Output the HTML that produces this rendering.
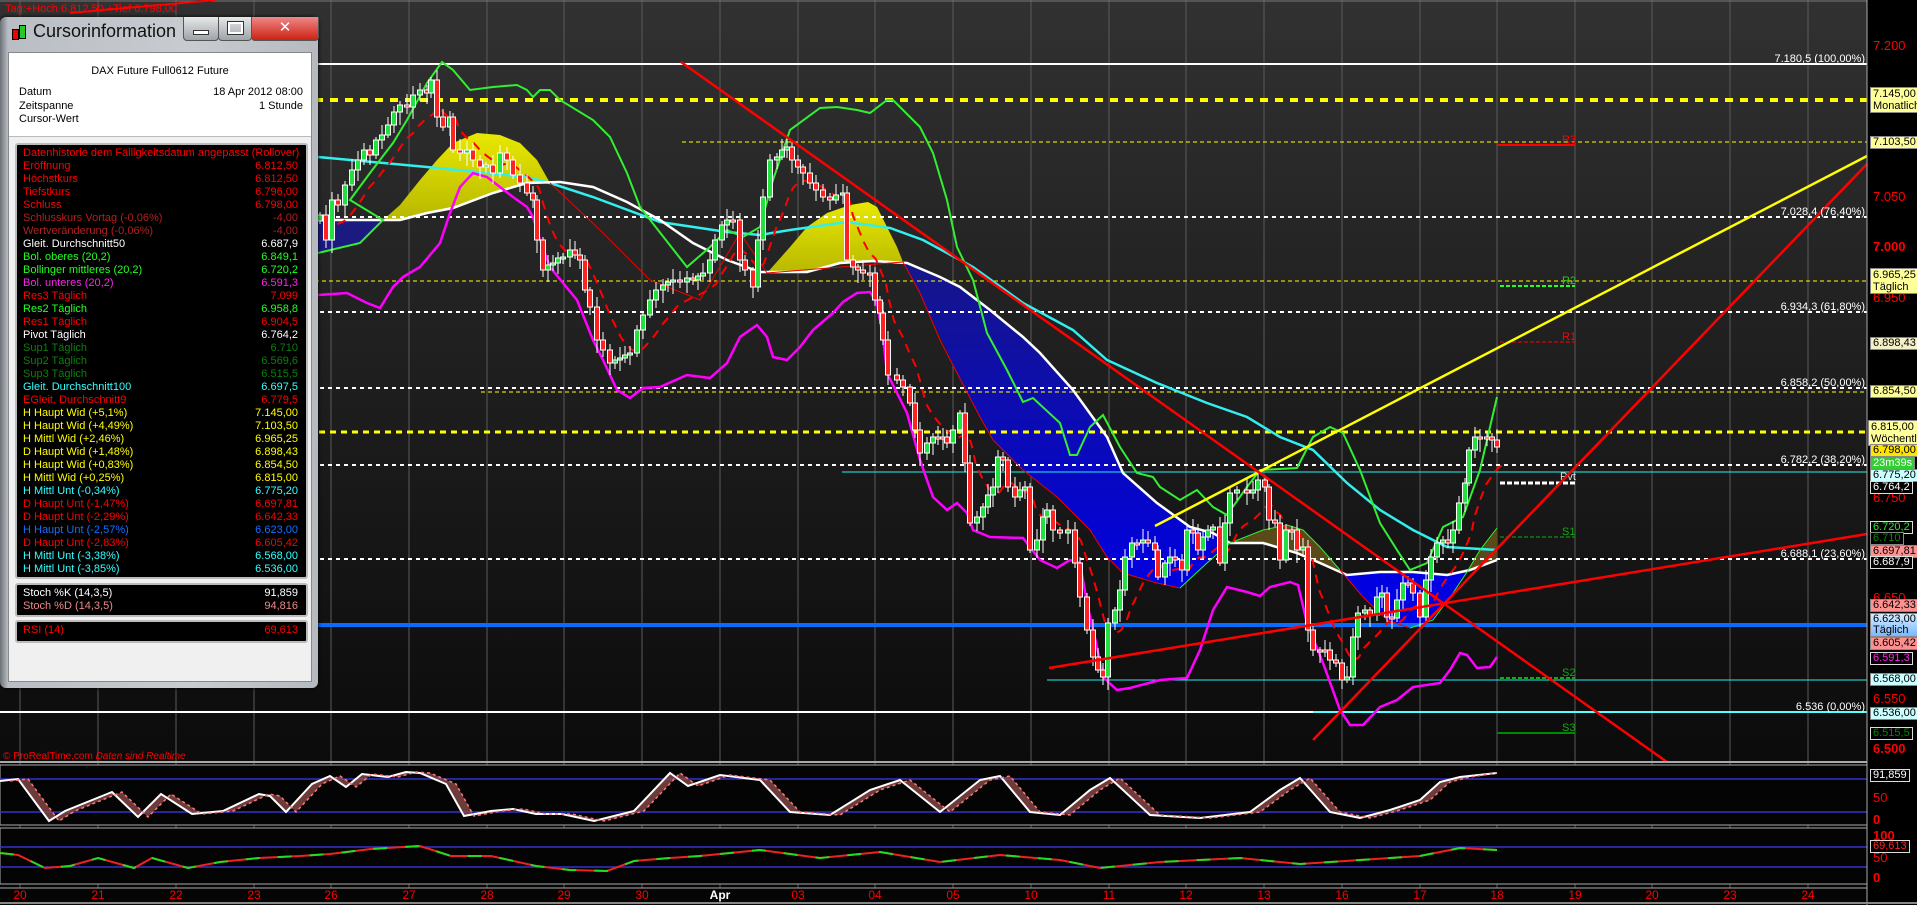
<!DOCTYPE html>
<html><head><meta charset="utf-8"><style>
html,body{margin:0;padding:0;background:#000;width:1917px;height:905px;overflow:hidden;font-family:"Liberation Sans",sans-serif}
#win{position:absolute;left:0;top:17px;width:318px;height:671px;border-radius:6px;background:linear-gradient(90deg,#6d7277 0,#b9bec4 8px,#c8ccd1 60%,#b5bac0);box-shadow:0 0 4px #000}
#title{position:absolute;left:33px;top:4px;font-size:18px;color:#111}
.btn{position:absolute;top:0;height:23px;border:1px solid #555;border-top:none;border-radius:0 0 4px 4px;background:linear-gradient(#e6e8ea,#9ea3a8)}
#inner{position:absolute;left:8px;top:35px;width:302px;height:628px;background:#f0f0f0;border:1px solid #888}
#hdr{position:absolute;left:0;top:0;width:302px;height:83px;background:#fff;border-bottom:1px solid #bbb;font-size:11px;color:#000}
.box{position:absolute;left:6px;width:289px;background:#000;border:2px solid #bbb;border-radius:3px;font-size:11px;line-height:13px}
.r{position:relative;height:13px;padding-left:6px;white-space:nowrap}
.r span{position:absolute;right:8px;top:0}
.ax{position:absolute;font-size:12px;color:#f00}
.lb{position:absolute;left:1870px;font-size:11px;line-height:11px;color:#000;padding:0 2px;border:1px solid #888;white-space:nowrap}
</style></head><body>
<svg id="c" width="1917" height="905" style="position:absolute;left:0;top:0" xmlns="http://www.w3.org/2000/svg">
<defs>
<linearGradient id="bg" x1="0" y1="0" x2="0" y2="1"><stop offset="0" stop-color="#313131"/><stop offset="1" stop-color="#0b0b0b"/></linearGradient>
<linearGradient id="bl" x1="0" y1="0" x2="0" y2="1"><stop offset="0" stop-color="#16168a"/><stop offset="1" stop-color="#0000e0"/></linearGradient>
<linearGradient id="yl" x1="0" y1="0" x2="0" y2="1"><stop offset="0" stop-color="#e8e800"/><stop offset="1" stop-color="#b8b800"/></linearGradient>
</defs>
<rect x="0" y="0" width="1867" height="762" fill="url(#bg)"/>
<rect x="0" y="762" width="1917" height="143" fill="#050505"/>
<rect x="1867" y="0" width="50" height="905" fill="#000"/>
<g id="grid" stroke="#5a5a5a" stroke-width="1"></g>
<line x1="0" y1="1" x2="1867" y2="1" stroke="#777"/>
<!-- clouds -->
<polygon fill="url(#yl)" points="383,220 400,205 420,180 437,160 453,143 477,133 500,135 520,143 537,160 550,183 527,183 493,193 453,208 427,213 400,220"/>
<polygon fill="url(#yl)" points="767,273 790,247 807,227 827,213 850,205 868,202 877,207 887,227 897,247 903,262 873,261 840,263 807,272"/>
<polygon fill="#1a1a80" points="318,253 360,243 383,220 318,220"/>
<polygon fill="url(#bl)" points="903,262 940,277 960,287 990,310 1023,337 1040,353 1073,390 1107,437 1123,473 1157,503 1190,527 1213,533 1230,543 1207,563 1180,588 1157,583 1123,573 1107,557 1090,530 1057,497 1023,470 993,440 980,417 957,373 937,330 920,293"/>
<polygon fill="#5a4a1a" points="1230,543 1263,530 1287,525 1303,530 1320,547 1340,570 1297,553 1263,543"/>
<polygon fill="#0000e0" points="1340,570 1347,575 1380,571 1413,572 1447,575 1467,572 1453,593 1433,620 1410,628 1387,620 1363,597"/>
<polygon fill="#5a4a1a" points="1467,572 1480,550 1497,528 1497,560 1470,570"/>
<!-- horizontal levels -->
<line x1="0" y1="64" x2="1867" y2="64" stroke="#fff" stroke-width="2"/>
<line x1="0" y1="100" x2="1867" y2="100" stroke="#ff0" stroke-width="4" stroke-dasharray="8,7"/>
<line x1="682" y1="142" x2="1867" y2="142" stroke="#ff0" stroke-width="1" stroke-dasharray="4,3"/>
<line x1="0" y1="217" x2="1867" y2="217" stroke="#fff" stroke-width="2" stroke-dasharray="4,4"/>
<line x1="0" y1="281" x2="1867" y2="281" stroke="#ff0" stroke-width="1" stroke-dasharray="4,3"/>
<line x1="0" y1="312" x2="1867" y2="312" stroke="#fff" stroke-width="2" stroke-dasharray="4,4"/>
<line x1="0" y1="388" x2="1867" y2="388" stroke="#fff" stroke-width="2" stroke-dasharray="4,4"/>
<line x1="481" y1="392" x2="1867" y2="392" stroke="#ff0" stroke-width="1" stroke-dasharray="4,3"/>
<line x1="0" y1="432" x2="1867" y2="432" stroke="#ff0" stroke-width="3" stroke-dasharray="6,5"/>
<line x1="0" y1="465" x2="1867" y2="465" stroke="#fff" stroke-width="2" stroke-dasharray="4,4"/>
<line x1="842" y1="472" x2="1867" y2="472" stroke="#2ee" stroke-width="1"/>
<line x1="0" y1="559" x2="1867" y2="559" stroke="#fff" stroke-width="2" stroke-dasharray="4,4"/>
<line x1="0" y1="625" x2="1867" y2="625" stroke="#0a6cff" stroke-width="4"/>
<line x1="1047" y1="680" x2="1867" y2="680" stroke="#2ee" stroke-width="1"/>
<line x1="0" y1="712" x2="1313" y2="712" stroke="#fff" stroke-width="2"/>
<line x1="1313" y1="712" x2="1867" y2="712" stroke="#5ff" stroke-width="2"/>
<!-- pivots -->
<g font-size="11" font-family="Liberation Sans,sans-serif">
<line x1="1497" y1="145" x2="1575" y2="145" stroke="#f00" stroke-width="2"/><text x="1562" y="143" fill="#f00">R3</text>
<line x1="1500" y1="286" x2="1575" y2="286" stroke="#2f2" stroke-width="2" stroke-dasharray="4,2"/><text x="1562" y="284" fill="#2c2">R2</text>
<line x1="1500" y1="342" x2="1575" y2="342" stroke="#f00" stroke-width="1" stroke-dasharray="4,2"/><text x="1562" y="340" fill="#f00">R1</text>
<line x1="1500" y1="483" x2="1575" y2="483" stroke="#fff" stroke-width="3" stroke-dasharray="5,2"/><text x="1560" y="480" fill="#ddd">Pvt</text>
<line x1="1500" y1="537" x2="1575" y2="537" stroke="#1a1" stroke-width="1" stroke-dasharray="4,2"/><text x="1562" y="535" fill="#1a1">S1</text>
<line x1="1500" y1="678" x2="1575" y2="678" stroke="#1a1" stroke-width="2" stroke-dasharray="4,2"/><text x="1562" y="676" fill="#1a1">S2</text>
<line x1="1497" y1="733" x2="1575" y2="733" stroke="#080" stroke-width="2"/><text x="1562" y="731" fill="#1a1">S3</text>
</g>
<!-- MAs -->
<polyline fill="none" stroke="#3ee" stroke-width="2.5" points="318,157 427,167 527,177 550,183 593,197 660,222 727,232 760,235 790,230 847,222 890,228 923,240 973,267 1023,303 1073,330 1107,360 1157,383 1207,403 1247,417 1280,437 1313,450 1347,483 1380,510 1413,530 1447,547 1497,550"/>
<polyline fill="none" stroke="#fff" stroke-width="2.5" points="318,220 400,220 427,213 453,208 493,193 527,183 560,182 593,187 627,202 660,220 693,243 727,260 760,272 807,272 840,263 873,261 907,263 940,277 960,287 990,310 1023,337 1040,353 1073,390 1107,437 1123,473 1157,503 1190,527 1213,533 1230,543 1263,543 1297,553 1320,563 1347,575 1380,572 1413,572 1447,575 1470,570 1497,560"/>
<polyline fill="none" stroke="#3e3" stroke-width="2" points="318,253 360,243 383,220 350,200 370,173 393,143 407,120 427,83 442,62 453,70 470,90 493,87 517,85 527,90 533,97 540,90 550,90 560,100 593,120 610,137 627,173 640,207 687,267 710,247 727,230 743,237 760,227 773,180 790,130 820,108 837,107 857,110 870,113 887,100 893,100 910,117 920,127 933,153 947,200 957,247 973,280 987,333 1007,370 1023,402 1033,398 1060,423 1070,455 1077,455 1090,427 1103,415 1120,447 1137,473 1153,477 1160,487 1180,500 1197,490 1213,507 1227,515 1247,487 1260,470 1297,468 1313,437 1330,427 1343,433 1360,470 1380,523 1397,550 1410,570 1427,563 1443,527 1463,517 1480,470 1497,397"/>
<polyline fill="none" stroke="#3e3" stroke-width="1" points="1180,588 1207,563 1230,543 1263,530 1287,525 1303,530 1320,547 1340,570 M"/>
<polyline fill="none" stroke="#3e3" stroke-width="1" points="1410,628 1433,620 1453,593 1467,572 1480,550 1497,528"/>
<polyline fill="none" stroke="#f0f" stroke-width="2.5" points="318,295 347,293 367,303 380,308 393,287 403,277 420,267 440,243 450,213 460,187 473,173 487,177 500,187 513,197 527,207 533,217 540,240 550,267 563,283 577,300 593,340 603,360 617,390 630,398 643,388 660,387 687,375 710,378 727,363 740,337 757,325 767,337 773,357 787,360 800,347 813,330 833,313 843,302 857,293 870,292 877,303 883,337 887,373 907,413 920,460 933,497 947,510 957,503 967,513 973,530 990,537 1023,538 1040,560 1057,568 1070,560 1080,563 1087,603 1097,647 1103,677 1117,690 1130,688 1160,680 1187,678 1200,650 1213,610 1227,587 1247,592 1260,596 1270,587 1290,582 1298,585 1307,623 1323,663 1340,710 1350,725 1363,725 1380,707 1397,700 1413,687 1440,683 1450,670 1460,653 1467,655 1477,668 1490,667 1497,657"/>
<polyline fill="none" stroke="#e00" stroke-width="1" points="550,183 600,230 650,280 700,300 740,233 767,273 903,262 920,293 940,340 957,373 980,417 993,440 1023,470 1057,497 1090,530 1107,557 1123,573 1157,583 1180,588"/>
<polyline fill="none" stroke="#e00" stroke-width="1" points="1340,570 1363,597 1387,620 1410,628"/>
<g id="cand"></g>
<!-- trend lines -->
<line x1="1155" y1="526" x2="1867" y2="156" stroke="#ff0" stroke-width="2.5"/>
<line x1="1313" y1="740" x2="1867" y2="164" stroke="#f00" stroke-width="2.5"/>
<line x1="1049" y1="668" x2="1867" y2="534" stroke="#f00" stroke-width="2.5"/>
<line x1="681" y1="62" x2="1667" y2="762" stroke="#f00" stroke-width="2.5"/>
<line x1="70" y1="13" x2="215" y2="0" stroke="#f00" stroke-width="2"/>
<text x="5" y="12" fill="#f00" font-size="11" font-family="Liberation Sans,sans-serif">Tag:+Hoch 6.812,50 +Tief 6.798,00</text>
<!-- fib labels -->
<g fill="#fff" font-size="11" font-family="Liberation Sans,sans-serif" text-anchor="end">
<text x="1865" y="62">7.180,5 (100,00%)</text>
<text x="1865" y="215">7.028,4 (76,40%)</text>
<text x="1865" y="310">6.934,3 (61,80%)</text>
<text x="1865" y="386">6.858,2 (50,00%)</text>
<text x="1865" y="463">6.782,2 (38,20%)</text>
<text x="1865" y="557">6.688,1 (23,60%)</text>
<text x="1865" y="710">6.536 (0,00%)</text>
</g>
<!-- panels -->
<line x1="0" y1="762" x2="1867" y2="762" stroke="#aaa" stroke-width="2"/>
<text x="3" y="759" fill="#f00" font-size="10" font-family="Liberation Sans,sans-serif">© ProRealTime.com <tspan font-style="italic">Daten sind Realtime</tspan></text>
<rect x="0" y="765" width="1867" height="60" fill="#040404" stroke="#aaa"/>
<line x1="0" y1="779" x2="1867" y2="779" stroke="#33c" stroke-width="1.5"/>
<line x1="0" y1="812" x2="1867" y2="812" stroke="#33c" stroke-width="1.5"/>
<g id="stoch"></g>
<rect x="0" y="828" width="1867" height="56" fill="#040404" stroke="#aaa"/>
<line x1="0" y1="847" x2="1867" y2="847" stroke="#33c" stroke-width="1.5"/>
<line x1="0" y1="867" x2="1867" y2="867" stroke="#33c" stroke-width="1.5"/>
<polyline fill="none" stroke="#e22" stroke-width="2" points="0,853 18,855 45,868 70,866 98,858 134,868 152,858 188,868 220,862 259,858 300,856 330,854 371,849 420,846 451,856 491,856 536,866 570,870 607,871 634,861 670,858 700,856 760,850 820,858 880,852 940,862 1000,855 1060,860 1100,868 1160,862 1240,858 1300,864 1360,860 1420,856 1460,848 1497,850"/>
<polyline fill="none" stroke="#2d2" stroke-width="2" stroke-dasharray="14,18" points="0,853 18,855 45,868 70,866 98,858 134,868 152,858 188,868 220,862 259,858 300,856 330,854 371,849 420,846 451,856 491,856 536,866 570,870 607,871 634,861 670,858 700,856 760,850 820,858 880,852 940,862 1000,855 1060,860 1100,868 1160,862 1240,858 1300,864 1360,860 1420,856 1460,848 1497,850"/>
<line x1="0" y1="888" x2="1867" y2="888" stroke="#aaa"/>
<line x1="1867" y1="0" x2="1867" y2="905" stroke="#aaa"/>
<line x1="0" y1="903" x2="1917" y2="903" stroke="#888" stroke-width="2"/>
<g id="dates" fill="#f00" font-size="12" font-family="Liberation Sans,sans-serif" text-anchor="middle"></g>
<g fill="#f00" font-size="13" font-family="Liberation Sans,sans-serif">
<text x="1873" y="50">7.200</text><text x="1873" y="201">7.050</text><text x="1873" y="251" font-weight="bold">7.000</text><text x="1873" y="302">6.950</text><text x="1873" y="502">6.750</text><text x="1873" y="602">6.650</text><text x="1873" y="703">6.550</text><text x="1873" y="753" font-weight="bold">6.500</text>
<text x="1873" y="802">50</text><text x="1873" y="824" font-weight="bold">0</text><text x="1873" y="840" font-weight="bold">100</text><text x="1873" y="862">50</text><text x="1873" y="882" font-weight="bold">0</text>
</g>
</svg>

<div class="lb" style="top:87px;background:#ffff9a;line-height:12px">7.145,00<br>Monatlich</div>
<div class="lb" style="top:136px;background:#ffff9a">7.103,50</div>
<div class="lb" style="top:268px;background:#ffff9a;line-height:12px">6.965,25<br>Täglich</div>
<div class="lb" style="top:337px;background:#f4f0c8">6.898,43</div>
<div class="lb" style="top:385px;background:#ffff9a">6.854,50</div>
<div class="lb" style="top:420px;left:1868px;background:#ffff9a;line-height:12px">6.815,00<br>Wöchentlich</div>
<div class="lb" style="top:444px;background:#ffe400">6.798,00</div>
<div class="lb" style="top:457px;background:#3c3;color:#fff">23m39s</div>
<div class="lb" style="top:469px;background:#ccffff">6.775,20</div>
<div class="lb" style="top:481px;background:#000;color:#fff;border-color:#ddd">6.764,2</div>
<div class="lb" style="top:521px;background:#000;color:#2e2;border-color:#ddd">6.720,2</div>
<div class="lb" style="top:532px;background:#000;color:#080">6.710</div>
<div class="lb" style="top:545px;background:#ff9090">6.697,81</div>
<div class="lb" style="top:556px;background:#000;color:#fff;border-color:#ddd">6.687,9</div>
<div class="lb" style="top:599px;background:#ff9090">6.642,33</div>
<div class="lb" style="top:613px;background:linear-gradient(#d8ecff,#79b8ff);line-height:11px">6.623,00<br>Täglich</div>
<div class="lb" style="top:637px;background:#ff9090">6.605,42</div>
<div class="lb" style="top:652px;background:#000;color:#f2e;border-color:#ddd">6.591,3</div>
<div class="lb" style="top:673px;background:#ccffff">6.568,00</div>
<div class="lb" style="top:707px;background:#ccffff">6.536,00</div>
<div class="lb" style="top:727px;background:#000;color:#080;border-color:#ddd">6.515,5</div>
<div class="lb" style="top:769px;background:#000;color:#fff;border-color:#ddd">91,859</div>
<div class="lb" style="top:840px;background:#000;color:#f22;border-color:#ddd">69,613</div>

<div id="win">
 <div style="position:absolute;left:12px;top:12px;width:5px;height:9px;background:#e00;border:1px solid #000"></div>
 <div style="position:absolute;left:19px;top:8px;width:5px;height:12px;background:#2c2;border:1px solid #000"></div>
 <div id="title">Cursorinformation</div>
 <div class="btn" style="left:183px;width:34px"><div style="margin:13px auto 0;width:14px;height:3px;background:#fff;border:1px solid #333"></div></div>
 <div class="btn" style="left:218px;width:32px"><div style="margin:5px auto 0;width:11px;height:8px;border:2px solid #fff;outline:1px solid #333"></div></div>
 <div class="btn" style="left:251px;width:66px;background:linear-gradient(#e88,#c21);color:#fff;text-align:center;font-size:15px;line-height:21px">✕</div>
 <div id="inner">
  <div id="hdr">
   <div style="position:absolute;left:0;width:302px;top:12px;text-align:center">DAX Future Full0612 Future</div>
   <div style="position:absolute;left:10px;top:33px;line-height:13.5px">Datum<br>Zeitspanne<br>Cursor-Wert</div>
   <div style="position:absolute;right:8px;top:33px;line-height:13.5px;text-align:right">18 Apr 2012 08:00<br>1 Stunde</div>
  </div>
  <div class="box" style="top:90px;height:430px;padding-top:2px">
   <div class="r" style="color:#f00">Datenhistorie dem Fälligkeitsdatum angepasst (Rollover)</div>
   <div class="r" style="color:#f00">Eröffnung<span>6.812,50</span></div>
   <div class="r" style="color:#f00">Höchstkurs<span>6.812,50</span></div>
   <div class="r" style="color:#f00">Tiefstkurs<span>6.796,00</span></div>
   <div class="r" style="color:#f00">Schluss<span>6.798,00</span></div>
   <div class="r" style="color:#b02020">Schlusskurs Vortag (-0,06%)<span>-4,00</span></div>
   <div class="r" style="color:#b02020">Wertveränderung (-0,06%)<span>-4,00</span></div>
   <div class="r" style="color:#fff">Gleit. Durchschnitt50<span>6.687,9</span></div>
   <div class="r" style="color:#2f2">Bol. oberes (20,2)<span>6.849,1</span></div>
   <div class="r" style="color:#2f2">Bollinger mittleres (20,2)<span>6.720,2</span></div>
   <div class="r" style="color:#f2e">Bol. unteres (20,2)<span>6.591,3</span></div>
   <div class="r" style="color:#f00">Res3 Täglich<span>7.099</span></div>
   <div class="r" style="color:#2f2">Res2 Täglich<span>6.958,8</span></div>
   <div class="r" style="color:#f00">Res1 Täglich<span>6.904,5</span></div>
   <div class="r" style="color:#fff">Pivot Täglich<span>6.764,2</span></div>
   <div class="r" style="color:#0a800a">Sup1 Täglich<span>6.710</span></div>
   <div class="r" style="color:#0a800a">Sup2 Täglich<span>6.569,6</span></div>
   <div class="r" style="color:#0a800a">Sup3 Täglich<span>6.515,5</span></div>
   <div class="r" style="color:#3ff">Gleit. Durchschnitt100<span>6.697,5</span></div>
   <div class="r" style="color:#f00">EGleit. Durchschnitt9<span>6.779,5</span></div>
   <div class="r" style="color:#ff0">H Haupt Wid (+5,1%)<span>7.145,00</span></div>
   <div class="r" style="color:#ff0">H Haupt Wid (+4,49%)<span>7.103,50</span></div>
   <div class="r" style="color:#ff0">H Mittl Wid (+2,46%)<span>6.965,25</span></div>
   <div class="r" style="color:#ff0">D Haupt Wid (+1,48%)<span>6.898,43</span></div>
   <div class="r" style="color:#ff0">H Haupt Wid (+0,83%)<span>6.854,50</span></div>
   <div class="r" style="color:#ff0">H Mittl Wid (+0,25%)<span>6.815,00</span></div>
   <div class="r" style="color:#3ff">H Mittl Unt (-0,34%)<span>6.775,20</span></div>
   <div class="r" style="color:#f00">D Haupt Unt (-1,47%)<span>6.697,81</span></div>
   <div class="r" style="color:#f00">D Haupt Unt (-2,29%)<span>6.642,33</span></div>
   <div class="r" style="color:#1a6cff">H Haupt Unt (-2,57%)<span>6.623,00</span></div>
   <div class="r" style="color:#f00">D Haupt Unt (-2,83%)<span>6.605,42</span></div>
   <div class="r" style="color:#3ff">H Mittl Unt (-3,38%)<span>6.568,00</span></div>
   <div class="r" style="color:#3ff">H Mittl Unt (-3,85%)<span>6.536,00</span></div>
  </div>
  <div class="box" style="top:530px;height:28px;padding-top:2px">
   <div class="r" style="color:#fff">Stoch %K (14,3,5)<span>91,859</span></div>
   <div class="r" style="color:#e88">Stoch %D (14,3,5)<span>94,816</span></div>
  </div>
  <div class="box" style="top:567px;height:17px;padding-top:2px">
   <div class="r" style="color:#f00">RSI (14)<span>69,613</span></div>
  </div>
 </div>
</div>

<script>
(function(){
var NS="http://www.w3.org/2000/svg";
function el(t,a,p){var e=document.createElementNS(NS,t);for(var k in a)e.setAttribute(k,a[k]);p.appendChild(e);return e;}
var gx=[20,98,176,254,331,409,487,564,642,720,798,875,953,1031,1109,1186,1264,1342,1420,1497,1575,1652,1730,1808];
var dl=["20","21","22","23","26","27","28","29","30","Apr","03","04","05","10","11","12","13","16","17","18","19","20","23","24"];
var g=document.getElementById("grid"),d=document.getElementById("dates");
gx.forEach(function(x,i){el("line",{x1:x,y1:0,x2:x,y2:888},g);var t=el("text",{x:x,y:899},d);t.textContent=dl[i];if(dl[i]=="Apr"){t.setAttribute("fill","#fff");t.setAttribute("font-weight","bold");}});
var P=[[320,215],[326,240],[332,200],[338,205],[345,185],[352,170],[358,160],[364,150],[370,155],[376,140],[382,135],[388,125],[394,112],[400,105],[407,107],[413,95],[420,90],[427,93],[431,80],[437,117],[443,127],[450,117],[453,150],[460,153],[467,150],[473,160],[480,167],[486,165],[493,173],[500,153],[507,160],[513,175],[520,183],[527,193],[533,200],[537,240],[543,270],[548,265],[553,263],[558,258],[563,257],[570,250],[575,255],[580,260],[585,290],[590,307],[597,340],[603,350],[610,363],[615,360],[620,358],[625,355],[630,353],[637,330],[643,315],[650,300],[656,290],[663,285],[668,282],[673,280],[680,282],[687,278],[693,280],[698,276],[703,273],[710,260],[715,240],[722,225],[727,220],[733,220],[740,260],[745,270],[753,287],[758,240],[763,197],[770,160],[777,157],[782,150],[787,147],[792,160],[798,167],[803,173],[810,183],[816,190],[823,197],[830,200],[836,195],[843,193],[847,260],[853,267],[858,270],[863,273],[870,273],[875,300],[880,313],[883,340],[888,375],[897,380],[903,387],[910,403],[915,430],[920,453],[927,443],[933,437],[938,437],[943,437],[947,443],[953,430],[960,413],[965,463],[970,523],[977,517],[983,507],[988,495],[993,487],[998,457],[1003,460],[1008,487],[1015,497],[1020,490],[1025,487],[1030,550],[1037,540],[1043,517],[1047,510],[1053,530],[1060,533],[1068,530],[1075,563],[1080,597],[1087,630],[1093,657],[1098,670],[1103,677],[1108,623],[1115,610],[1120,590],[1125,557],[1132,543],[1137,543],[1143,540],[1148,543],[1155,550],[1158,577],[1165,563],[1170,557],[1175,560],[1182,570],[1187,530],[1193,533],[1198,550],[1203,537],[1208,530],[1213,527],[1220,563],[1225,523],[1230,493],[1237,490],[1247,493],[1253,490],[1258,480],[1265,487],[1269,520],[1275,523],[1280,560],[1286,530],[1292,530],[1297,550],[1303,547],[1308,630],[1313,650],[1320,650],[1325,650],[1330,660],[1336,663],[1342,680],[1347,677],[1353,637],[1358,613],[1365,610],[1370,615],[1377,597],[1382,593],[1387,617],[1392,618],[1397,600],[1403,583],[1408,583],[1413,593],[1420,617],[1426,580],[1431,557],[1437,543],[1443,540],[1448,543],[1453,530],[1459,503],[1465,483],[1469,450],[1475,437],[1480,437],[1487,437],[1492,440],[1497,447]];
var c=document.getElementById("cand");
var e=P[0][1],ep=[];
P.forEach(function(p,i){e=e+0.25*(p[1]-e);ep.push((p[0]+6)+","+(e+8).toFixed(1));});
el("polyline",{points:ep.join(" "),fill:"none",stroke:"#f00","stroke-width":2,"stroke-dasharray":"9,7"},c);
P.forEach(function(p,i){var x=p[0],cl=p[1],op=i?P[i-1][1]:cl+6;var t=Math.min(op,cl),b=Math.max(op,cl);if(b-t<2)b=t+2;
var w1=3+(i*7)%9,w2=3+(i*5)%11;el("line",{x1:x,y1:t-w1,x2:x,y2:b+w2,stroke:"#fff","stroke-width":1},c);
el("rect",{x:x-2.5,y:t,width:5,height:b-t,fill:cl<op?"#22e040":"#ff2222",stroke:"#fff","stroke-width":1},c);});
var K=[[0,781],[18,779],[49,821],[65,811],[112,792],[138,817],[161,794],[192,814],[223,811],[259,794],[270,796],[286,812],[312,784],[330,776],[346,787],[362,774],[388,777],[406,772],[420,773],[446,784],[464,816],[491,811],[513,809],[536,814],[562,814],[594,821],[634,811],[670,773],[688,786],[720,775],[760,780],[790,812],[830,815],[870,790],[900,780],[940,812],[980,780],[1000,776],[1030,812],[1060,815],[1090,790],[1110,778],[1150,815],[1200,818],[1250,812],[1280,790],[1300,778],[1330,812],[1360,818],[1390,810],[1420,800],[1440,782],[1460,777],[1497,773]];
var s=document.getElementById("stoch");
var kp=K.map(function(p){return p.join(",")}).join(" ");
var dp=K.map(function(p){return Math.min(1497,p[0]+10)+","+p[1]}).join(" ");
var dr=K.slice().reverse().map(function(p){return Math.min(1497,p[0]+10)+","+p[1]}).join(" ");
el("polygon",{points:kp+" "+dr,fill:"#8a4a4a",opacity:0.8},s);
el("polyline",{points:kp,fill:"none",stroke:"#fff","stroke-width":2},s);
el("polyline",{points:dp,fill:"none",stroke:"#f77","stroke-width":1.5,"stroke-dasharray":"3,3"},s);
})();
</script>
</body></html>
